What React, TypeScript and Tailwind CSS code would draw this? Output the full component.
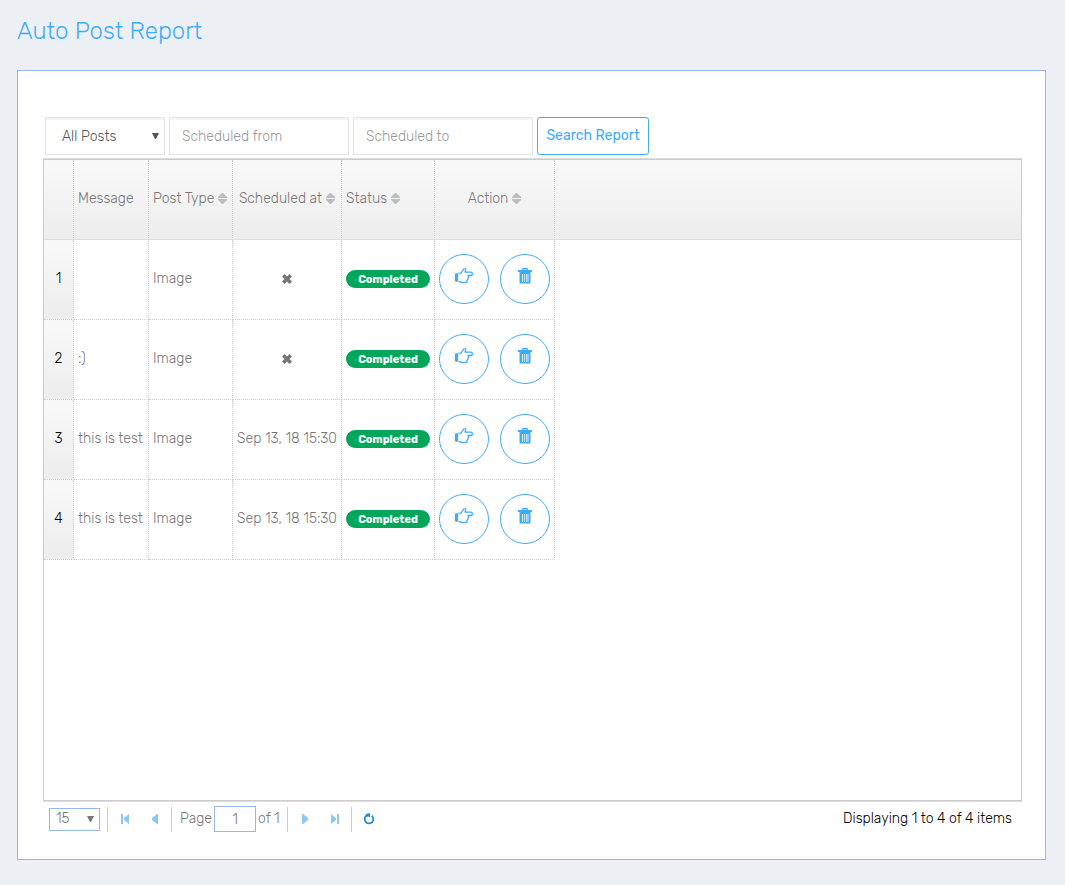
import type { ReactNode } from "react";

type Post = { id: number; message: string; type: string; scheduledAt: string | null };

const posts: Post[] = [
  { id: 1, message: "", type: "Image", scheduledAt: null },
  { id: 2, message: ":)", type: "Image", scheduledAt: null },
  { id: 3, message: "this is test", type: "Image", scheduledAt: "Sep 13, 18 15:30" },
  { id: 4, message: "this is test", type: "Image", scheduledAt: "Sep 13, 18 15:30" },
];

function SortIcon() {
  return (
    <svg aria-hidden="true" width="9" height="11" viewBox="0 0 9 11" fill="#bdbdbd" className="inline-block shrink-0">
      <path d="M4 0h1l4 4v1H0V4zM0 6h9v1L5 11H4L0 7z" />
    </svg>
  );
}

function HandIcon() {
  return (
    <svg aria-hidden="true" width="18" height="18" viewBox="1 0 18 18" className="block">
      <path d="M1 6.2h3.2v8.6H1.6L1 14.2z" fill="#3facfa" />
      <path
        d="M4.6 6.4 7.2 5.8 9.6 2.2Q10.2 1.3 11.2 1.7Q12.1 2.2 11.7 3.3L10.9 5.2H17Q18.4 5.4 18.4 6.8Q18.4 8.3 17 8.5H14.2L14.6 9.6 14 10.8 14.1 12 13.2 13.2 13 14.2Q12.6 15.6 11 15.6H7.6L5.8 14.6H4.6"
        fill="none"
        stroke="#3facfa"
        strokeWidth="1.3"
        strokeLinejoin="round"
      />
    </svg>
  );
}

function TrashIcon() {
  return (
    <svg aria-hidden="true" width="14" height="16" viewBox="0 0 14 16" className="block">
      <path
        fill="#3facfa"
        fillRule="evenodd"
        d="M4 2V1.4Q4 0 5.3 0h3.4Q10 0 10 1.4V2h3.6l.4.4V4H0V2.4L.4 2zM5.2 2h3.6v-.6H5.2zM1.5 4h11v10.6q0 .9-.9.9H2.4q-.9 0-.9-.9zM4 6v8h.8V6zM6 6v8h.7V6zM8 6v8h.7V6zM9.6 6v8h.8V6z"
      />
    </svg>
  );
}

function CrossIcon() {
  return (
    <svg role="img" aria-label="Not scheduled" width="10" height="10" viewBox="0 0 10 10" className="mx-auto block">
      <path d="M2.5 0 5 2.5 7.5 0 10 2.5 7.5 5 10 7.5 7.5 10 5 7.5 2.5 10 0 7.5 2.5 5 0 2.5z" fill="#777" />
    </svg>
  );
}

function Caret({ className }: { className: string }) {
  return (
    <svg aria-hidden="true" width="7" height="6" viewBox="0 0 7 6" className={"pointer-events-none absolute " + className}>
      <path d="M0 0h7L4 6H3z" fill="currentColor" />
    </svg>
  );
}

function PagerButton({ label, children }: { label: string; children: ReactNode }) {
  return (
    <button type="button" aria-label={label} className="flex h-6 w-[30px] items-center justify-center">
      <svg aria-hidden="true" width="10" height="10" viewBox="0 0 10 10" fill="#8cc8f4">
        {children}
      </svg>
    </button>
  );
}

const divider = "h-[25px] w-px shrink-0 bg-[#ccc]";
const th = "h-20 border-r border-b border-r-[#ccc] border-b-[#ddd] [border-right-style:dotted] px-1 pb-0.5 font-light whitespace-nowrap";
const td = "h-20 border-r border-b border-dotted border-[#ccc] px-1 pb-0.5 whitespace-nowrap";
const rounded =
  "flex size-[50px] items-center justify-center rounded-full border border-[#3facfa] pb-1.5";
const field =
  "h-[38px] border border-[#e2e6e9] bg-white text-sm font-light shadow-[inset_0_2px_2px_rgba(0,0,0,0.05)] outline-none";

export default function App() {
  return (
    <main className="min-h-screen bg-[#ecf0f5] pt-4 pr-[19px] pb-[25px] pl-[17px] font-[Rubik,Roboto,sans-serif] text-sm leading-5 font-light text-[#777]">
      <h1 className="h-[54px] text-2xl leading-[30px] font-light text-[#3facfa]">Auto Post Report</h1>

      <section className="border border-[#95b8e7] bg-white pt-[46px] pr-[23px] pb-[27px] pl-[25px]">
        <form className="flex flex-wrap gap-1 pb-[3px] pl-0.5" onSubmit={(e) => e.preventDefault()}>
          <div className="relative text-[#555]">
            <select aria-label="Post filter" className={field + " w-[120px] appearance-none pt-0.5 pl-4"}>
              <option>All Posts</option>
            </select>
            <Caret className="top-4 right-1.5" />
          </div>
          <input
            aria-label="Scheduled from"
            placeholder="Scheduled from"
            className={field + " w-[180px] px-3 placeholder:text-[#999]"}
          />
          <input
            aria-label="Scheduled to"
            placeholder="Scheduled to"
            className={field + " w-[180px] px-3 placeholder:text-[#999]"}
          />
          <button
            type="submit"
            className="h-[38px] w-[112px] rounded-[3px] border border-[#3facfa] text-sm font-normal whitespace-nowrap text-[#3facfa]"
          >
            Search Report
          </button>
        </form>

        <div className="border-y border-[#ddd]">
          <div className="min-h-[642px] border border-[#ccc]">
            <div className="bg-[linear-gradient(to_bottom,#f9f9f9,#ededed_79px,#ddd_79px,#ddd_80px,transparent_80px)]">
              <table className="table-fixed border-separate border-spacing-0">
                <colgroup>
                  <col className="w-[30px]" />
                  <col className="w-[75px]" />
                  <col className="w-[84px]" />
                  <col className="w-[109px]" />
                  <col className="w-[93px]" />
                  <col className="w-[120px]" />
                </colgroup>
                <thead>
                  <tr>
                    <th className={th} aria-label="Row" />
                    <th className={th + " text-left"}>Message</th>
                    <th className={th}>
                      <span className="flex items-center gap-1">
                        Post Type <SortIcon />
                      </span>
                    </th>
                    <th className={th}>
                      <span className="flex items-center justify-center gap-1">
                        Scheduled at <SortIcon />
                      </span>
                    </th>
                    <th className={th}>
                      <span className="flex items-center gap-1">
                        Status <SortIcon />
                      </span>
                    </th>
                    <th className={th}>
                      <span className="flex items-center justify-center gap-1">
                        Action <SortIcon />
                      </span>
                    </th>
                  </tr>
                </thead>
                <tbody>
                  {posts.map((p) => (
                    <tr key={p.id}>
                      <td className={td + " bg-linear-to-b from-[#f9f9f9] to-[#ededed] text-center text-black"}>{p.id}</td>
                      <td className={td + " bg-white"}>{p.message}</td>
                      <td className={td + " bg-white"}>{p.type}</td>
                      <td className={td + " bg-white text-center"}>{p.scheduledAt ?? <CrossIcon />}</td>
                      <td className={td}>
                        <span className="flex h-[18px] items-center justify-center rounded-[10px] bg-[#00a65a] pt-0.5 text-[11px] leading-4 font-bold text-white">
                          Completed
                        </span>
                      </td>
                      <td className={td}>
                        <span className="flex justify-between">
                          <button type="button" aria-label={"View post " + p.id} className={rounded}>
                            <HandIcon />
                          </button>
                          <button type="button" aria-label={"Delete post " + p.id} className={rounded}>
                            <TrashIcon />
                          </button>
                        </span>
                      </td>
                    </tr>
                  ))}
                </tbody>
              </table>
            </div>
          </div>
        </div>

        <nav aria-label="Pagination" className="flex items-center pt-1 pr-2.5 pl-1.5">
          <div className="relative mr-[7px]">
            <select
              aria-label="Rows per page"
              className="block h-[23px] w-[51px] appearance-none border border-[#95b8e7] bg-white pl-1.5 text-sm leading-5 font-light outline-none"
            >
              <option>15</option>
            </select>
            <Caret className="top-2 right-1.5" />
          </div>
          <span className={divider} />
          <span className="flex pr-px pl-0.5">
            <PagerButton label="First page">
              <path d="M1 0h2v10H1zM9 0v10L4 6V4z" />
            </PagerButton>
            <PagerButton label="Previous page">
              <path d="M8 0v10H7L2 6V4l5-4z" />
            </PagerButton>
          </span>
          <span className={divider} />
          <label htmlFor="page" className="pr-0.5 pl-2">
            Page
          </label>
          <input
            id="page"
            defaultValue="1"
            className="h-[26px] w-[42px] border border-[#95b8e7] text-center text-sm font-light outline-none"
          />
          <span className="pr-[7px] pl-0.5">of 1</span>
          <span className={divider} />
          <span className="flex pr-px pl-0.5">
            <PagerButton label="Next page">
              <path d="M2 0v10h1l5-4V4L3 0z" />
            </PagerButton>
            <PagerButton label="Last page">
              <path d="M7 0h2v10H7zM1 0v10l5-4V4z" />
            </PagerButton>
          </span>
          <span className={divider} />
          <button type="button" aria-label="Refresh" className="flex h-6 w-[34px] items-center justify-center">
            <svg aria-hidden="true" width="12" height="12" viewBox="0 0 12 12">
              <path d="M8.8 2.8A4.3 4.3 0 1 1 3.2 2.8" fill="none" stroke="#1d8fe0" strokeWidth="1.8" />
              <path d="M3 .9 7 0v4.4L5.6 3.4 3 4z" fill="#1d8fe0" />
            </svg>
          </button>
          <span className="ml-auto text-black">Displaying 1 to 4 of 4 items</span>
        </nav>
      </section>
    </main>
  );
}
